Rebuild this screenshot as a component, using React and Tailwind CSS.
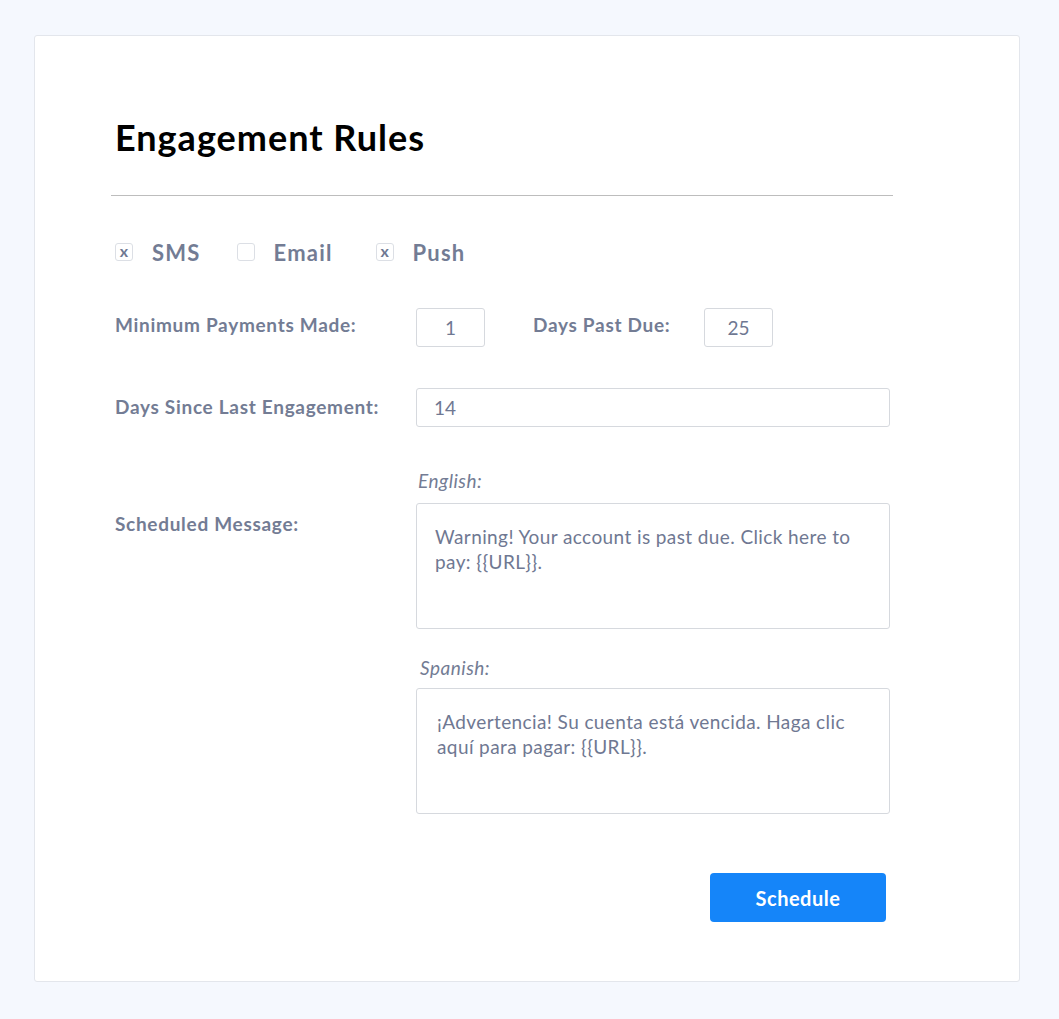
import { useState } from "react";

const font = { fontFamily: "Lato, 'Open Sans', sans-serif" };

function Check({ label, checked, onToggle }) {
  return (
    <button type="button" onClick={onToggle} className="flex items-center cursor-pointer">
      <span className="w-[18px] h-[18px] rounded-[3px] border border-[#dcdfe5] bg-white flex items-center justify-center text-[16px] font-bold leading-none text-[#6f7892] pb-[2px]">
        {checked ? "x" : ""}
      </span>
      <span className="ml-[19px] text-[22px] font-bold tracking-[1.2px] text-[#737c94]">{label}</span>
    </button>
  );
}

export default function App() {
  const [channels, setChannels] = useState({ SMS: true, Email: false, Push: true });

  const toggle = (k) => setChannels((prev) => ({ ...prev, [k]: !prev[k] }));

  return (
    <div className="min-h-screen bg-[#f5f8fe] pt-[35px] pl-[34px] pb-[38px]" style={font}>
      <div className="w-[986px] h-[947px] bg-white border border-[#e3e6ec] rounded-[3px] pl-[76px] pt-[80px]">
        {/* Title */}
        <h1 className="ml-[4px] text-[36px] font-bold tracking-[1px] text-black leading-[42px]">Engagement Rules</h1>
        <div className="mt-[37px] w-[782px] h-px bg-[#bdbdbd]" />

        <div className="ml-[4px]">
          {/* Channels */}
          <div className="mt-[41px] flex items-center h-[30px]">
            <Check label="SMS" checked={channels.SMS} onToggle={() => toggle("SMS")} />
            <div className="ml-[36px]">
              <Check label="Email" checked={channels.Email} onToggle={() => toggle("Email")} />
            </div>
            <div className="ml-[43px]">
              <Check label="Push" checked={channels.Push} onToggle={() => toggle("Push")} />
            </div>
          </div>

          {/* Min payments / days past due */}
          <div className="mt-[41px] flex items-start">
            <div className="w-[301px] pt-[3px] text-[19px] font-bold tracking-[0.7px] text-[#737c94]">Minimum Payments Made:</div>
            <input
              defaultValue="1"
              className="w-[69px] h-[39px] border border-[#d6d9de] rounded-[3px] text-center text-[19px] text-[#6f7892] outline-none"
            />
            <div className="ml-[48px] w-[171px] pt-[3px] text-[19px] font-bold tracking-[0.7px] text-[#737c94]">Days Past Due:</div>
            <input
              defaultValue="25"
              className="w-[69px] h-[39px] border border-[#d6d9de] rounded-[3px] text-center text-[19px] text-[#6f7892] outline-none"
            />
          </div>

          {/* Days since last engagement */}
          <div className="mt-[41px] flex items-center">
            <div className="w-[301px] text-[19px] font-bold tracking-[0.7px] text-[#737c94]">Days Since Last Engagement:</div>
            <input
              defaultValue="14"
              className="w-[474px] h-[39px] border border-[#d6d9de] rounded-[3px] px-[17px] text-[19px] text-[#6f7892] outline-none"
            />
          </div>

          {/* Scheduled message */}
          <div className="mt-[42px] flex items-start">
            <div className="w-[301px] pt-[41px] text-[19px] font-bold tracking-[0.7px] text-[#737c94]">Scheduled Message:</div>
            <div className="flex flex-col">
              <div className="ml-[2px] text-[19px] italic tracking-[0.5px] text-[#737c94] leading-[24px]">English:</div>
              <textarea
                defaultValue="Warning! Your account is past due. Click here to pay: {{URL}}."
                className="mt-[10px] w-[474px] h-[126px] border border-[#d6d9de] rounded-[3px] px-[18px] pt-[20px] text-[19px] tracking-[0.4px] leading-[25px] text-[#6f7892] resize-none outline-none"
              />
              <div className="mt-[27px] ml-[4px] text-[19px] italic tracking-[0.5px] text-[#737c94] leading-[24px]">Spanish:</div>
              <textarea
                defaultValue="¡Advertencia! Su cuenta está vencida. Haga clic aquí para pagar: {{URL}}."
                className="mt-[8px] w-[474px] h-[126px] border border-[#d6d9de] rounded-[3px] px-[20px] pt-[20px] text-[19px] tracking-[0.4px] leading-[25px] text-[#6f7892] resize-none outline-none"
              />
              <div className="mt-[59px] flex justify-end pr-[4px]">
                <button className="w-[176px] h-[49px] rounded-[4px] bg-[#1585f9] text-white text-[20px] font-bold tracking-[0.5px]">
                  Schedule
                </button>
              </div>
            </div>
          </div>
        </div>
      </div>
    </div>
  );
}
